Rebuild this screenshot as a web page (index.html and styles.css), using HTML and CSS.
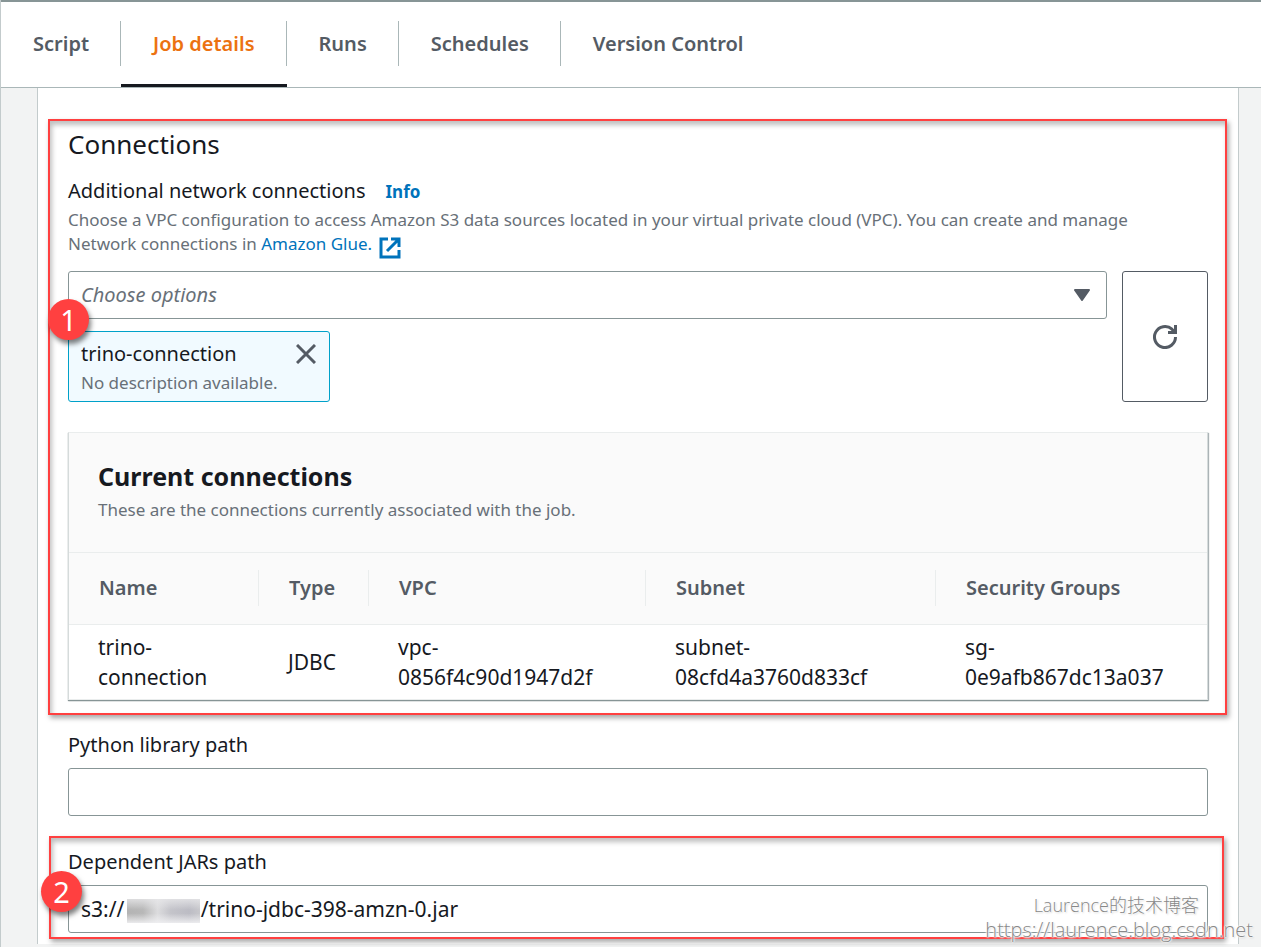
FILE: index.html
```html
<!DOCTYPE html>
<html lang="en">
<head>
<meta charset="utf-8">
<title>Job details</title>
<link rel="stylesheet" href="styles.css">
</head>
<body>
<nav class="tabs" aria-label="Job sections">
  <a class="tab" href="#script">Script</a>
  <a class="tab tab-active" href="#details" aria-current="page">Job details</a>
  <a class="tab" href="#runs">Runs</a>
  <a class="tab" href="#schedules">Schedules</a>
  <a class="tab" href="#version">Version Control</a>
</nav>
<main class="panel">
  <section class="section marked marked-connections">
    <h2 class="heading">Connections</h2>
    <div class="label-row">
      <label class="label" for="connections">Additional network connections</label>
      <a class="info" href="#info">Info</a>
    </div>
    <p class="description">Choose a VPC configuration to access Amazon S3 data sources located in your virtual private cloud (VPC). You can create and manage Network connections in <a class="link" href="#glue">Amazon Glue.<svg class="external" viewBox="0 0 22 22" aria-hidden="true"><path d="M9 2H2v18h18v-7M12 2h8v8M20 2 8 14" fill="none" stroke="currentColor" stroke-width="3"/></svg></a></p>
    <div class="chooser">
      <div class="chooser-main">
        <div class="select-wrap">
          <select class="field select" id="connections"><option>Choose options</option></select>
          <svg class="arrow" viewBox="0 0 16 12" aria-hidden="true"><path d="M1 1h14L8 11z" fill="currentColor" stroke="currentColor" stroke-width="2" stroke-linejoin="round"/></svg>
        </div>
        <div class="token">
          <div>
            <div class="token-name">trino-connection</div>
            <div class="token-note">No description available.</div>
          </div>
          <button class="dismiss" type="button" aria-label="Remove trino-connection">
            <svg viewBox="0 0 20 20" aria-hidden="true"><path d="m1 1 18 18M19 1 1 19" fill="none" stroke="currentColor" stroke-width="3"/></svg>
          </button>
        </div>
      </div>
      <button class="refresh" type="button" aria-label="Refresh">
        <svg viewBox="0 0 24 24" aria-hidden="true"><path d="M22.500 12a10.500 10.500 0 1 1-3.500-7.800L22 7.500M22.500 0v7.500H15" fill="none" stroke="currentColor" stroke-width="3"/></svg>
      </button>
    </div>
    <div class="container">
      <header class="container-header">
        <h3 class="container-title">Current connections</h3>
        <p class="container-note">These are the connections currently associated with the job.</p>
      </header>
      <table class="table">
        <colgroup><col class="col-name"><col class="col-type"><col class="col-vpc"><col class="col-subnet"><col></colgroup>
        <thead>
          <tr><th scope="col"><span>Name</span></th><th scope="col"><span>Type</span></th><th scope="col"><span>VPC</span></th><th scope="col"><span>Subnet</span></th><th scope="col"><span>Security Groups</span></th></tr>
        </thead>
        <tbody>
          <tr><td>trino-<wbr>connection</td><td>JDBC</td><td>vpc-<br>0856f4c90d1947d2f</td><td>subnet-<br>08cfd4a3760d833cf</td><td>sg-<br>0e9afb867dc13a037</td></tr>
        </tbody>
      </table>
    </div>
    <span class="badge badge-one">1</span>
  </section>
  <section class="section">
    <label class="label" for="python">Python library path</label>
    <input class="field" id="python" type="text">
  </section>
  <section class="section section-jars marked marked-jars">
    <label class="label" for="jars">Dependent JARs path</label>
    <div class="jar-wrap">
      <input class="field field-jars" id="jars" type="text" value="s3://              /trino-jdbc-398-amzn-0.jar">
      <span class="redacted"></span>
    </div>
    <span class="badge badge-two">2</span>
  </section>
</main>
<div class="watermark"><span class="watermark-name">Laurence的技术博客</span><span class="watermark-url">https://laurence.blog.csdn.net</span></div>
</body>
</html>
```
FILE: styles.css
```css
* { box-sizing: border-box; }
body {
  margin: 0;
  position: relative;
  overflow-x: hidden;
  background: #f2f3f3;
  border-left: 1px solid #c3cbcc;
  color: #16191f;
  font-family: "Noto Sans", "Noto Sans CJK SC", sans-serif;
  font-size: 20px;
  line-height: 30px;
}
h2, h3, p { margin: 0; font-weight: 400; }
a { text-decoration: none; }
button { padding: 0; background: none; font: inherit; color: #545b64; }

.tabs {
  display: flex;
  height: 88px;
  border-top: 2px solid #879596;
  border-bottom: 1px solid #aab7b8;
  background: #fff;
}
.tab {
  position: relative;
  padding: 27px 32px 0;
  color: #545b64;
  font-size: 20px;
  font-weight: 600;
}
.tab:not(:last-child)::after {
  content: "";
  position: absolute;
  right: 0;
  top: 19px;
  width: 1px;
  height: 45px;
  background: #aab7b8;
}
.tab-active { color: #ec7211; border-bottom: 3px solid #16191f; }

.panel {
  margin: 0 22px 3px 36px;
  padding: 40px 30px 11px;
  border: solid #c3cbcc;
  border-width: 0 1px;
  background: #fff;
}
.section { position: relative; }
.section + .section { margin-top: 30px; }
.section + .section-jars { margin-top: 31px; }
.marked::after {
  content: "";
  position: absolute;
  border: 2px solid #ff4040;
  box-shadow: 2px 3px 5px rgba(0, 0, 0, .35), inset 2px 4px 5px rgba(0, 0, 0, .25);
  pointer-events: none;
}
.marked-connections::after { inset: -9px -19px -15px -20px; }
.marked-jars::after { inset: -11px -16px -6px -19px; }

.heading { font-size: 26px; line-height: 32px; }
.label-row { display: flex; align-items: baseline; gap: 20px; margin-top: 16px; }
.label { display: block; font-size: 20px; line-height: 30px; }
.info { color: #0073bb; font-size: 17px; font-weight: 700; }
.link { color: #0073bb; }
.description { max-width: 1110px; margin-top: 1px; color: #687078; font-size: 17px; line-height: 24px; }
.external { width: 22px; height: 22px; margin: 0 0 -9px 7px; vertical-align: baseline; }

.chooser { display: flex; gap: 15px; margin-top: 15px; }
.chooser-main { flex: 1; }
.field {
  display: block;
  width: 100%;
  height: 48px;
  padding: 0 12px;
  border: 1px solid #879596;
  border-radius: 3px;
  background: #fff;
  color: #16191f;
  font: inherit;
}
.field-jars { font-size: 21px; }
.select-wrap { position: relative; }
.select { appearance: none; color: #687078; font-style: italic; }
.arrow { position: absolute; right: 17px; top: 18px; width: 16px; height: 12px; color: #545b64; pointer-events: none; }
.token {
  display: flex;
  justify-content: space-between;
  width: 262px;
  height: 71px;
  margin-top: 12px;
  padding: 7px 12px;
  border: 1px solid #00a1c9;
  border-radius: 3px;
  background: #f1faff;
}
.token-name { line-height: 30px; }
.token-note { color: #687078; font-size: 17px; line-height: 28px; white-space: nowrap; }
.dismiss { flex: none; width: 20px; height: 20px; margin: 5px 1px 0 -20px; border: 0; line-height: 0; }
.refresh { width: 86px; border: 1px solid #545b64; border-radius: 3px; line-height: 0; }
.refresh svg { width: 24px; height: 24px; }

.container {
  margin-top: 30px;
  border: 1px solid #eaeded;
  border-right-color: #d5dbdb;
  border-left-color: #d5dbdb;
  background: #fff;
  box-shadow: 0 1px 1px #879596, 1px 1px 1px rgba(0, 28, 36, .3);
}
.container-header { height: 120px; padding: 27px 29px; border-bottom: 1px solid #eaeded; background: #fafafa; }
.container-title { font-size: 25px; line-height: 32px; font-weight: 700; }
.container-note { margin-top: 4px; color: #687078; font-size: 17px; line-height: 28px; }
.table { width: 100%; table-layout: fixed; border-collapse: collapse; text-align: left; }
.col-name { width: 190px; }
.col-type { width: 110px; }
.col-vpc { width: 277px; }
.col-subnet { width: 290px; }
.table th { padding: 17px 0 18px; background: #fafafa; border-bottom: 1px solid #eaeded; color: #545b64; font-weight: 600; }
.table th span { display: block; padding: 3px 0 3px 30px; border-right: 1px solid #eaeded; }
.table th:last-child span { border: 0; }
.table td { padding: 7px 20px 7px 29px; font-size: 21px; vertical-align: middle; }

.section .label + .field, .jar-wrap { margin-top: 8px; }
.jar-wrap { position: relative; }
.redacted {
  position: absolute;
  left: 59px;
  top: 14px;
  width: 73px;
  height: 24px;
  background:
    linear-gradient(rgba(232, 232, 234, .8), rgba(232, 232, 234, 0) 45%, rgba(232, 232, 234, 0) 60%, rgba(240, 240, 242, .9)),
    linear-gradient(90deg, #b4b4b4, #b8b8b8 22%, #dcdcde 42%, #c4c4ca 60%, #bcbcc4 85%, #c8c8cc);
}
.badge {
  position: absolute;
  z-index: 1;
  width: 41px;
  height: 41px;
  border-radius: 50%;
  background: #ff4040;
  color: #fff;
  box-shadow: 2px 4px 5px rgba(0, 0, 0, .5);
  font-size: 29px;
  line-height: 41px;
  text-align: center;
}
.badge-one { left: -20px; top: 171px; }
.badge-two { left: -27px; top: 24px; }

.watermark {
  position: absolute;
  right: 8px;
  bottom: 4px;
  z-index: 2;
  display: flex;
  flex-direction: column;
  align-items: flex-end;
  color: #888;
  font-family: "Open Sans", "Noto Sans CJK SC", sans-serif;
  font-weight: 300;
  text-shadow: 0 0 1px #fff, 0 0 2px #fff, 0 0 2px #fff, 0 0 3px #fff, 1px 1px 2px #ccc;
}
.watermark-name { padding-right: 54px; font-size: 18px; line-height: 24px; }
.watermark-url { font-size: 20px; line-height: 26px; }
```
